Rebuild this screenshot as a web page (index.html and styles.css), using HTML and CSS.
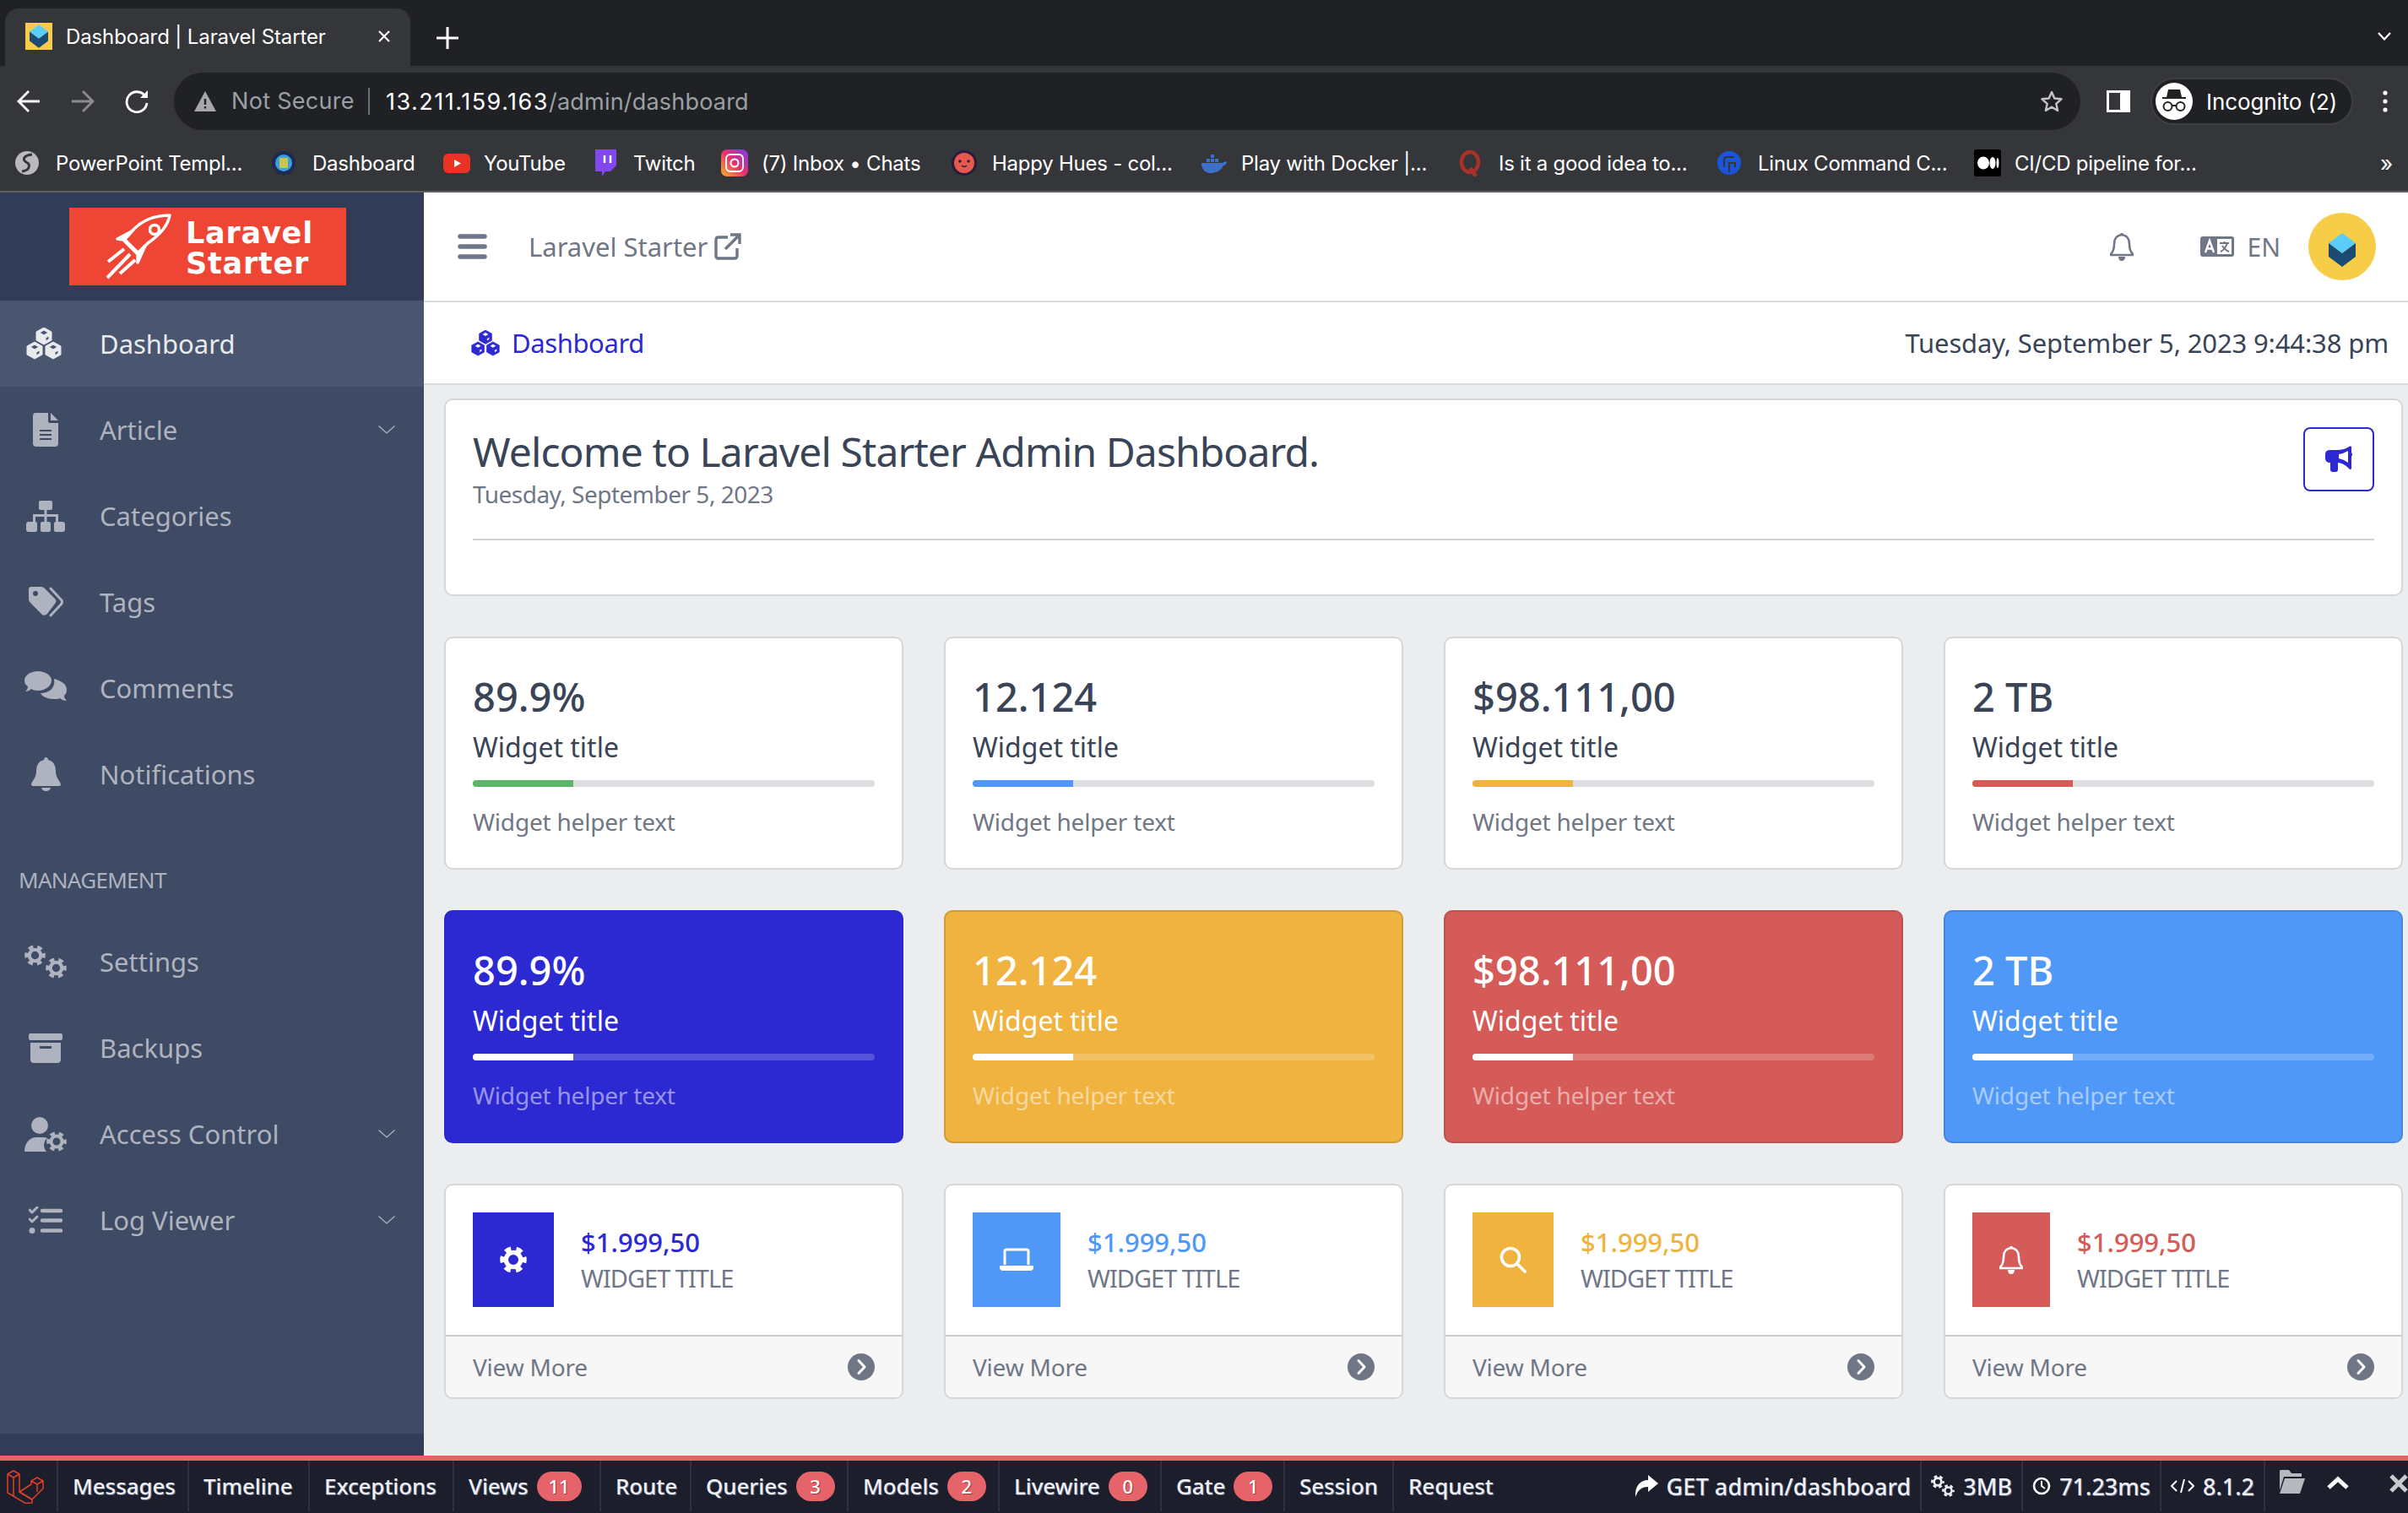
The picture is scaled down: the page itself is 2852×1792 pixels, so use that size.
FILE: index.html
```html
<!DOCTYPE html>
<html lang="en">
<head>
<meta charset="utf-8">
<title>Dashboard | Laravel Starter</title>
<link rel="stylesheet" href="styles.css">
</head>
<body>
<svg class="defs" aria-hidden="true">
  <symbol id="cubes" viewBox="0 0 42 38"><path fill="currentColor" fill-rule="evenodd" d="M21 0L30 5V15L21 20L12 15V5ZM21 3L26 6L21 9L16 6ZM23 12L27 10V13.5L23 16ZM10 17L19 22V32L10 37L1 32V22ZM10 20L15 23L10 26L5 23ZM12 29L16 27V30.5L12 33ZM32 17L41 22V32L32 37L23 32V22ZM32 20L37 23L32 26L27 23ZM34 29L38 27V30.5L34 33Z" stroke="currentColor" stroke-width="1" stroke-linejoin="round"/></symbol>
  <symbol id="file" viewBox="0 0 30 40"><path fill="currentColor" fill-rule="evenodd" d="M3 0H18V10Q18 12 20 12H30V36Q30 40 26 40H4Q0 40 0 36V4Q0 0 3 0ZM8 20V22H22V20ZM8 25V27H22V25ZM8 30V32H22V30Z"/><path fill="currentColor" d="M21 0L30 9H21Z"/></symbol>
  <symbol id="sitemap" viewBox="0 0 46 37"><path fill="currentColor" d="M17 0H29Q31 0 31 2V9Q31 11 29 11H24.500V16H38V25H35V19H24.500V25H21.500V19H11V25H8V16H21.500V11H17Q15 11 15 9V2Q15 0 17 0ZM3 25H11Q13 25 13 27V35Q13 37 11 37H3Q0 37 0 34V28Q0 25 3 25ZM19 25H27Q29 25 29 27V35Q29 37 27 37H19Q17 37 17 35V27Q17 25 19 25ZM35 25H43Q46 25 46 28V34Q46 37 43 37H35Q33 37 33 35V27Q33 25 35 25Z"/></symbol>
  <symbol id="tags" viewBox="0 0 41 36"><path fill="currentColor" fill-rule="evenodd" d="M3 0H15Q17 0 19 2L31 14Q34 17 31 20L22 32Q19 35 16 33L2 19Q0 17 0 15V3Q0 0 3 0ZM8 5A3 3 0 1 0 8 11A3 3 0 1 0 8 5Z"/><path fill="none" stroke="currentColor" stroke-width="3" stroke-linecap="round" d="M26 2L39 16Q40 18 39 20L26 34"/></symbol>
  <symbol id="comments" viewBox="0 0 50 41"><path fill="currentColor" d="M16 0C25 0 32 5 32 11C32 17 25 23 16 23C13 23 10 22 8 21C6 23 3 24 1 24C3 22 4 20 4 18C1 16 0 14 0 11C0 5 7 0 16 0Z"/><path fill="currentColor" d="M35 9C43 11 50 15 50 22C50 25 49 27 47 29C47 31 48 33 50 35C47 35 44 34 42 32C40 33 38 33 35 33C27 33 21 30 19 26C29 26 37 20 35 9Z"/></symbol>
  <symbol id="bellsolid" viewBox="0 0 35 40"><path fill="currentColor" d="M17.500 0Q20 0 20 3Q29 5 29 16C29 25 35 29 35 32Q35 34 33 34H2Q0 34 0 32C0 29 6 25 6 16Q6 5 15 3Q15 0 17.500 0ZM12 36H23Q22 40 17.500 40Q13 40 12 36Z"/></symbol>
  <symbol id="bellline" viewBox="0 0 28 33"><path fill="none" stroke="currentColor" stroke-width="2.600" stroke-linejoin="round" d="M14 2Q23 3 23 13C23 20 25 23 27 25V26H1V25C3 23 5 20 5 13Q5 3 14 2Z"/><path fill="currentColor" d="M10 28H18Q18 33 14 33Q10 33 10 28ZM12.500 0H15.500V3H12.500Z"/></symbol>
  <symbol id="gear" viewBox="0 0 24 24"><circle cx="12" cy="12" r="6.500" fill="none" stroke="currentColor" stroke-width="4"/><circle cx="12" cy="12" r="9.800" fill="none" stroke="currentColor" stroke-width="4" stroke-dasharray="5.500 4.760" stroke-dashoffset="2.750"/></symbol>
  <symbol id="gears" viewBox="0 0 50 40"><use href="#gear" x="0" y="0" width="25" height="25"/><use href="#gear" x="25" y="15" width="25" height="25"/></symbol>
  <symbol id="gearsnarrow" viewBox="0 0 28 26"><use href="#gear" x="0" y="0" width="16" height="16"/><use href="#gear" x="13" y="11" width="15" height="15"/></symbol>
  <symbol id="archive" viewBox="0 0 40 35"><path fill="currentColor" fill-rule="evenodd" d="M2 0H38Q40 0 40 2V6Q40 8 38 8H2Q0 8 0 6V2Q0 0 2 0ZM2 11H38V31Q38 35 34 35H6Q2 35 2 31ZM13 15V18H27V15Z"/></symbol>
  <symbol id="usergear" viewBox="0 0 50 41"><circle cx="18" cy="10" r="10" fill="currentColor"/><path fill="currentColor" d="M0 41C0 30 7 24 14 24H22Q25 24 27 25C22 29 22 36 26 41Z"/><use href="#gear" x="26" y="17" width="24" height="24"/></symbol>
  <symbol id="listcheck" viewBox="0 0 40 33"><path fill="none" stroke="currentColor" stroke-width="3" stroke-linecap="round" stroke-linejoin="round" d="M1 4L4 7L10 1M1 15L4 18L10 12"/><circle cx="4" cy="28.500" r="3.500" fill="currentColor"/><path fill="none" stroke="currentColor" stroke-width="4.500" stroke-linecap="round" d="M16 5H38M16 16.500H38M16 28.500H38"/></symbol>
  <symbol id="chev" viewBox="0 0 20 10"><path fill="none" stroke="currentColor" stroke-width="1.300" d="M0.500 0.500L10 9L19.500 0.500"/></symbol>
  <symbol id="circlechev" viewBox="0 0 32 32"><circle cx="16" cy="16" r="16" fill="currentColor"/><path fill="none" stroke="#fff" stroke-width="3" stroke-linecap="round" stroke-linejoin="round" d="M13 8.500L20 16L13 23.500"/></symbol>
  <symbol id="cube" viewBox="0 0 32 40"><path fill="#5bcdf9" d="M16 0L32 12L16 24L0 12Z"/><path fill="#1b4a72" d="M0 12L16 24L32 12V28L16 40L0 28Z"/></symbol>
</svg>

<div class="tabstrip">
  <div class="tab">
    <svg class="favicon" viewBox="0 0 32 32"><rect width="32" height="32" fill="#f7cc46"/><use href="#cube" x="5" y="0" width="22" height="32"/></svg>
    <span class="tab-title">Dashboard | Laravel Starter</span>
    <svg class="tab-x" viewBox="0 0 16 16"><path stroke="#fff" stroke-width="2.200" d="M2 2L14 14M14 2L2 14"/></svg>
  </div>
  <svg class="tab-plus" viewBox="0 0 26 26"><path stroke="#fff" stroke-width="3" d="M13 0V26M0 13H26"/></svg>
  <svg class="tab-chev" viewBox="0 0 16 10"><path fill="none" stroke="#fff" stroke-width="2.200" d="M1 1L8 8.500L15 1"/></svg>
</div>

<div class="toolbar">
  <svg class="nav-ic" viewBox="0 0 28 28"><path fill="none" stroke="#fff" stroke-width="2.800" d="M27 14H3M14 2L2 14L14 26"/></svg>
  <svg class="nav-ic nav-off" viewBox="0 0 28 28"><path fill="none" stroke="#8a8b8d" stroke-width="2.800" d="M1 14H25M14 2L26 14L14 26"/></svg>
  <svg class="nav-ic nav-reload" viewBox="0 0 28 28"><path fill="none" stroke="#fff" stroke-width="2.800" d="M24 8A12 12 0 1 0 26 16"/><path fill="#fff" d="M18 10H27V1Z"/></svg>
  <div class="omnibox">
    <svg class="warn" viewBox="0 0 26 24"><path fill="#a6a7a9" fill-rule="evenodd" d="M13 0L26 24H0ZM11.800 9V16H14.200V9ZM11.800 18V20.500H14.200V18Z"/></svg>
    <span class="not-secure">Not Secure</span>
    <span class="url"><span class="url-host">13.211.159.163</span>/admin/dashboard</span>
    <svg class="star" viewBox="0 0 28 28"><path fill="none" stroke="#c4c5c7" stroke-width="2.400" stroke-linejoin="round" d="M14 3L17.300 10.500L25.500 11.300L19.300 16.800L21.100 25L14 20.800L6.900 25L8.700 16.800L2.500 11.300L10.700 10.500Z"/></svg>
  </div>
  <svg class="panel" viewBox="0 0 28 28"><path fill="#fff" fill-rule="evenodd" d="M0 1H28V27H0ZM3 4V24H16V4Z"/></svg>
  <div class="incognito">
    <svg class="inc-ic" viewBox="0 0 44 44"><circle cx="22" cy="22" r="22" fill="#fff"/><path fill="#202124" d="M15 8H29L31 17H36V19H8V17H13Z"/><circle cx="14.500" cy="28" r="5" fill="none" stroke="#202124" stroke-width="2"/><circle cx="29.500" cy="28" r="5" fill="none" stroke="#202124" stroke-width="2"/><path stroke="#202124" stroke-width="2" d="M19 27H25"/></svg>
    <span class="inc-text">Incognito (2)</span>
  </div>
  <svg class="dots" viewBox="0 0 6 26"><circle cx="3" cy="3" r="2.600" fill="#fff"/><circle cx="3" cy="13" r="2.600" fill="#fff"/><circle cx="3" cy="23" r="2.600" fill="#fff"/></svg>
</div>

<div class="bookmarks">
  <div class="bm"><svg class="bm-ic" viewBox="0 0 32 32"><circle cx="14" cy="16" r="14" fill="#b9babc"/><path fill="none" stroke="#35363a" stroke-width="3" d="M20 6C10 7 8 12 13 15C19 18 17 25 8 26"/></svg><span>PowerPoint Templ...</span></div>
  <div class="bm"><svg class="bm-ic" viewBox="0 0 32 32"><circle cx="14" cy="16" r="14" fill="#1e2a52"/><circle cx="14" cy="16" r="10" fill="#3aa0dc"/><rect x="9" y="10" width="10" height="12" fill="#c8c64a"/></svg><span>Dashboard</span></div>
  <div class="bm"><svg class="bm-ic" viewBox="0 0 32 32"><rect y="5" width="32" height="23" rx="6" fill="#ea3323"/><path fill="#fff" d="M13 12L21 16.500L13 21Z"/></svg><span>YouTube</span></div>
  <div class="bm"><svg class="bm-ic" viewBox="0 0 32 32"><path fill="#8347ef" d="M3 0H28V19L21 26H15L11 32V26H3Z"/><path stroke="#fff" stroke-width="2.500" d="M14 7V16M21 7V16"/></svg><span>Twitch</span></div>
  <div class="bm"><svg class="bm-ic" viewBox="0 0 32 32"><defs><linearGradient id="ig" x1="0" y1="1" x2="1" y2="0"><stop offset="0" stop-color="#fdb028"/><stop offset=".5" stop-color="#e8306e"/><stop offset="1" stop-color="#7a3bf0"/></linearGradient></defs><rect width="32" height="32" rx="7" fill="url(#ig)"/><rect x="6" y="6" width="20" height="20" rx="5" fill="none" stroke="#fff" stroke-width="2"/><circle cx="16" cy="16" r="4.500" fill="none" stroke="#fff" stroke-width="2"/></svg><span>(7) Inbox • Chats</span></div>
  <div class="bm"><svg class="bm-ic" viewBox="0 0 32 32"><circle cx="15" cy="16" r="15" fill="#2b1a3a"/><circle cx="15" cy="16" r="12" fill="#e6594f"/><circle cx="10" cy="14" r="1.700" fill="#2b1a3a"/><circle cx="20" cy="14" r="1.700" fill="#2b1a3a"/><path fill="none" stroke="#2b1a3a" stroke-width="1.500" d="M12 19Q15 22 18 19"/></svg><span>Happy Hues - col...</span></div>
  <div class="bm"><svg class="bm-ic" viewBox="0 0 32 28"><path fill="#3d71c9" d="M1 14H26Q29 11 31 13Q30 17 27 17C24 24 17 26 11 26C5 26 1 21 1 14Z"/><path fill="#3d71c9" d="M7 9H11V13H7ZM12 9H16V13H12ZM17 9H21V13H17ZM12 4H16V8H12Z"/></svg><span>Play with Docker |...</span></div>
  <div class="bm"><svg class="bm-ic" viewBox="0 0 32 32"><ellipse cx="14" cy="15" rx="10" ry="12" fill="none" stroke="#a83228" stroke-width="4.500"/><path stroke="#a83228" stroke-width="4.500" d="M14 22L21 32"/></svg><span>Is it a good idea to...</span></div>
  <div class="bm"><svg class="bm-ic" viewBox="0 0 32 32"><circle cx="14" cy="16" r="14" fill="#1a56db"/><path fill="none" stroke="#35363a" stroke-width="2.200" d="M20 9H11Q8 9 8 12V21M14 27V16H21V21"/></svg><span>Linux Command C...</span></div>
  <div class="bm"><svg class="bm-ic" viewBox="0 0 32 32"><rect width="32" height="32" rx="3" fill="#000"/><ellipse cx="11" cy="16" rx="7" ry="7.500" fill="#fff"/><ellipse cx="22" cy="16" rx="3.500" ry="7" fill="#fff"/><ellipse cx="28" cy="16" rx="1.500" ry="6" fill="#fff"/></svg><span>CI/CD pipeline for...</span></div>
  <div class="bm-more">»</div>
</div>

<div class="app">
  <aside class="sidebar">
    <div class="brand">
      <div class="logo">
        <svg class="rocket" viewBox="0 0 78 78"><g fill="none" stroke="#fff" stroke-width="3.500" stroke-linejoin="round"><path d="M76 2C60 2 45 7 34 18L22 31L38 47L50 35C66 24 74 14 76 2Z"/><circle cx="58" cy="19" r="5.500"/><path fill="#fff" d="M31 21L14 30L22 31ZM47 38L38 58L38 47Z"/><path d="M22 31L38 47" stroke-width="5"/></g><path stroke="#fff" stroke-width="4" d="M22 42L3 57M29 48L2 76M35 55L17 71"/></svg>
        <div class="logo-text">Laravel<br>Starter</div>
      </div>
    </div>
    <nav class="nav">
      <a class="nav-item is-active"><span class="nav-icon"><svg class="i-cubes"><use href="#cubes"/></svg></span><span class="nav-label">Dashboard</span></a>
      <a class="nav-item"><span class="nav-icon"><svg class="i-file"><use href="#file"/></svg></span><span class="nav-label">Article</span><svg class="nav-chev"><use href="#chev"/></svg></a>
      <a class="nav-item"><span class="nav-icon"><svg class="i-sitemap"><use href="#sitemap"/></svg></span><span class="nav-label">Categories</span></a>
      <a class="nav-item"><span class="nav-icon"><svg class="i-tags"><use href="#tags"/></svg></span><span class="nav-label">Tags</span></a>
      <a class="nav-item"><span class="nav-icon"><svg class="i-comments"><use href="#comments"/></svg></span><span class="nav-label">Comments</span></a>
      <a class="nav-item"><span class="nav-icon"><svg class="i-bell"><use href="#bellsolid"/></svg></span><span class="nav-label">Notifications</span></a>
      <div class="nav-title">MANAGEMENT</div>
      <a class="nav-item"><span class="nav-icon"><svg class="i-gears"><use href="#gears"/></svg></span><span class="nav-label">Settings</span></a>
      <a class="nav-item"><span class="nav-icon"><svg class="i-archive"><use href="#archive"/></svg></span><span class="nav-label">Backups</span></a>
      <a class="nav-item"><span class="nav-icon"><svg class="i-usergear"><use href="#usergear"/></svg></span><span class="nav-label">Access Control</span><svg class="nav-chev"><use href="#chev"/></svg></a>
      <a class="nav-item"><span class="nav-icon"><svg class="i-listcheck"><use href="#listcheck"/></svg></span><span class="nav-label">Log Viewer</span><svg class="nav-chev"><use href="#chev"/></svg></a>
    </nav>
    <div class="sidebar-foot"></div>
  </aside>

  <main class="main">
    <header class="topbar">
      <svg class="burger" viewBox="0 0 35 30"><path stroke="#6f7685" stroke-width="5.500" stroke-linecap="round" d="M3 3H32M3 15H32M3 27H32"/></svg>
      <span class="app-name">Laravel Starter</span>
      <svg class="ext" viewBox="0 0 32 32"><path fill="none" stroke="#6f7685" stroke-width="3.400" d="M16 5H5Q2 5 2 8V27Q2 30 5 30H24Q27 30 27 27V18"/><path fill="none" stroke="#6f7685" stroke-width="3.400" d="M13 19L29 3M19 2H30V13"/></svg>
      <span class="topbar-gap"></span>
      <svg class="top-bell"><use href="#bellline"/></svg>
      <svg class="lang" viewBox="0 0 40 24"><rect width="40" height="24" rx="3" fill="#6f7685"/><rect x="20" y="3" width="17" height="18" fill="#fff"/><path fill="none" stroke="#fff" stroke-width="2.400" d="M6 19L11 5L16 19M8 14.500H14"/><path fill="none" stroke="#6f7685" stroke-width="2" d="M23 8H34M28.500 6V8M32 8Q29 16 24 18M26 11Q29 16 34 18"/></svg>
      <span class="lang-text">EN</span>
      <span class="avatar"><svg class="avatar-cube"><use href="#cube"/></svg></span>
    </header>
    <div class="crumbs">
      <a class="crumb"><svg class="crumb-ic"><use href="#cubes"/></svg><span>Dashboard</span></a>
      <span class="clock">Tuesday, September 5, 2023 9:44:38 pm</span>
    </div>
    <div class="content">
      <section class="card welcome">
        <div class="welcome-head">
          <div>
            <h1 class="welcome-title">Welcome to Laravel Starter Admin Dashboard.</h1>
            <div class="welcome-date">Tuesday, September 5, 2023</div>
          </div>
          <button class="megaphone"><svg viewBox="0 0 32 32"><path fill="#2c29d2" d="M31 1V8Q33 10 31 13V27Q30 29 28 27Q23 21 15 20V28Q15 31 12 31H9Q6 31 6 28V20Q0 20 0 15V10Q0 5 6 5H14Q23 5 28 1Q30 0 31 1ZM27 6Q22 9 16 10V15Q22 16 27 20Z"/></svg></button>
        </div>
        <hr class="welcome-rule">
      </section>

      <div class="grid">
        <div class="card stat"><div class="stat-num">89.9%</div><div class="stat-title">Widget title</div><div class="bar"><div class="bar-fill fill-success"></div></div><div class="stat-help">Widget helper text</div></div>
        <div class="card stat"><div class="stat-num">12.124</div><div class="stat-title">Widget title</div><div class="bar"><div class="bar-fill fill-info"></div></div><div class="stat-help">Widget helper text</div></div>
        <div class="card stat"><div class="stat-num">$98.111,00</div><div class="stat-title">Widget title</div><div class="bar"><div class="bar-fill fill-warning"></div></div><div class="stat-help">Widget helper text</div></div>
        <div class="card stat"><div class="stat-num">2 TB</div><div class="stat-title">Widget title</div><div class="bar"><div class="bar-fill fill-danger"></div></div><div class="stat-help">Widget helper text</div></div>

        <div class="card stat solid bg-primary"><div class="stat-num">89.9%</div><div class="stat-title">Widget title</div><div class="bar"><div class="bar-fill"></div></div><div class="stat-help">Widget helper text</div></div>
        <div class="card stat solid bg-warning"><div class="stat-num">12.124</div><div class="stat-title">Widget title</div><div class="bar"><div class="bar-fill"></div></div><div class="stat-help">Widget helper text</div></div>
        <div class="card stat solid bg-danger"><div class="stat-num">$98.111,00</div><div class="stat-title">Widget title</div><div class="bar"><div class="bar-fill"></div></div><div class="stat-help">Widget helper text</div></div>
        <div class="card stat solid bg-info"><div class="stat-num">2 TB</div><div class="stat-title">Widget title</div><div class="bar"><div class="bar-fill"></div></div><div class="stat-help">Widget helper text</div></div>

        <div class="card mini"><div class="mini-body"><div class="mini-icon tile-primary"><svg class="mi-gear"><use href="#gear"/></svg></div><div><div class="mini-value text-primary">$1.999,50</div><div class="mini-title">WIDGET TITLE</div></div></div><div class="mini-foot"><span>View More</span><svg class="more-ic"><use href="#circlechev"/></svg></div></div>
        <div class="card mini"><div class="mini-body"><div class="mini-icon tile-info"><svg class="mi-laptop" viewBox="0 0 40 28"><path fill="none" stroke="#fff" stroke-width="3" d="M6 20V4Q6 2 8 2H32Q34 2 34 4V20"/><path fill="#fff" d="M0 21H40V23Q40 27 36 27H4Q0 27 0 23Z"/></svg></div><div><div class="mini-value text-info">$1.999,50</div><div class="mini-title">WIDGET TITLE</div></div></div><div class="mini-foot"><span>View More</span><svg class="more-ic"><use href="#circlechev"/></svg></div></div>
        <div class="card mini"><div class="mini-body"><div class="mini-icon tile-warning"><svg class="mi-search" viewBox="0 0 32 32"><circle cx="13" cy="13" r="10.500" fill="none" stroke="#fff" stroke-width="3.600"/><path stroke="#fff" stroke-width="3.600" stroke-linecap="round" d="M21 21L30 30"/></svg></div><div><div class="mini-value text-warning">$1.999,50</div><div class="mini-title">WIDGET TITLE</div></div></div><div class="mini-foot"><span>View More</span><svg class="more-ic"><use href="#circlechev"/></svg></div></div>
        <div class="card mini"><div class="mini-body"><div class="mini-icon tile-danger"><svg class="mi-bell"><use href="#bellline"/></svg></div><div><div class="mini-value text-danger">$1.999,50</div><div class="mini-title">WIDGET TITLE</div></div></div><div class="mini-foot"><span>View More</span><svg class="more-ic"><use href="#circlechev"/></svg></div></div>
      </div>
    </div>
  </main>
</div>

<footer class="debugbar">
  <div class="db-logo"><svg viewBox="0 0 44 42"><g fill="none" stroke="#e0402b" stroke-width="1.500" stroke-linejoin="round"><path d="M1 7L8 3L15 7V28L30 37V41L22 41.500L1 29ZM1 7L8 11L15 7M8 11V33"/><path d="M29 15L36 11L43 15V24L30 37L15 28L29 19ZM29 15L36 19L43 15M36 19V28"/></g></svg></div>
  <div class="db-tab">Messages</div>
  <div class="db-tab">Timeline</div>
  <div class="db-tab">Exceptions</div>
  <div class="db-tab">Views<span class="db-badge">11</span></div>
  <div class="db-tab">Route</div>
  <div class="db-tab">Queries<span class="db-badge">3</span></div>
  <div class="db-tab">Models<span class="db-badge">2</span></div>
  <div class="db-tab">Livewire<span class="db-badge">0</span></div>
  <div class="db-tab">Gate<span class="db-badge">1</span></div>
  <div class="db-tab">Session</div>
  <div class="db-tab db-last">Request</div>
  <div class="db-right">
    <div class="db-stat db-stat-plain"><svg class="db-ic" viewBox="0 0 28 26"><path fill="#fff" d="M16 0L28 10L16 20V14C9 14 4 17 1 26C0 14 6 6 16 6Z"/></svg>GET admin/dashboard</div>
    <div class="db-stat"><svg class="db-ic"><use href="#gearsnarrow"/></svg>3MB</div>
    <div class="db-stat"><svg class="db-ic db-clock" viewBox="0 0 22 22"><circle cx="11" cy="11" r="9" fill="none" stroke="#fff" stroke-width="2.600"/><path fill="none" stroke="#fff" stroke-width="2" d="M11 5V11L15 14"/></svg>71.23ms</div>
    <div class="db-stat"><svg class="db-ic" viewBox="0 0 28 18"><path fill="none" stroke="#fff" stroke-width="2" d="M7 3L1 9L7 15M21 3L27 9L21 15M16 1L12 17"/></svg>8.1.2</div>
    <div class="db-actions">
      <svg class="db-folder" viewBox="0 0 30 28"><path fill="#b6b8bd" d="M1 0H11L14 4H26V8H5L0 24V1ZM6 10H30L24 28H0Z"/></svg>
      <svg class="db-up" viewBox="0 0 26 16"><path fill="none" stroke="#fff" stroke-width="5" d="M2 14L13 4L24 14"/></svg>
      <svg class="db-x" viewBox="0 0 22 22"><path stroke="#c8cad0" stroke-width="5" d="M2 2L20 20M20 2L2 20"/></svg>
    </div>
  </div>
</footer>
</body>
</html>
```
FILE: styles.css
```css
* { box-sizing: border-box; }
html, body { margin: 0; padding: 0; }
body {
  width: 2852px;
  height: 1792px;
  overflow: hidden;
  display: flex;
  flex-direction: column;
  background: #ebedef;
  font-family: "Noto Sans", sans-serif;
  color: #394456;
}
.defs { position: absolute; width: 0; height: 0; }
svg { display: block; flex: none; }

/* Browser chrome */
.tabstrip {
  height: 78px;
  flex: none;
  background: #202124;
  display: flex;
  align-items: flex-end;
  padding-left: 6px;
  padding-right: 20px;
  font-family: Inter, sans-serif;
}
.tab {
  width: 480px;
  height: 68px;
  background: #35363a;
  border-radius: 16px 16px 0 0;
  display: flex;
  align-items: center;
  padding-left: 24px;
  padding-bottom: 2px;
  color: #fff;
}
.favicon { width: 32px; height: 32px; }
.tab-title { font-size: 24px; margin-left: 16px; width: 369px; white-space: nowrap; letter-spacing: -.12px; }
.tab-x { width: 16px; height: 16px; }
.tab-plus { width: 26px; height: 26px; margin-left: 31px; margin-bottom: 20px; }
.tab-chev { width: 16px; height: 10px; margin-left: auto; margin-bottom: 30px; }

.toolbar {
  height: 84px;
  flex: none;
  background: #35363a;
  display: flex;
  align-items: center;
  padding: 0 0 0 20px;
  font-family: Inter, sans-serif;
}
.nav-ic { width: 28px; height: 28px; margin-right: 36px; }
.nav-reload { margin-right: 30px; }
.omnibox {
  width: 2258px;
  height: 68px;
  border-radius: 34px;
  background: #202124;
  display: flex;
  align-items: center;
  padding-left: 24px;
  font-size: 27px;
  color: #9aa0a6;
}
.warn { width: 26px; height: 24px; margin-right: 18px; }
.not-secure { width: 164px; height: 32px; line-height: 32px; border-right: 2px solid #6d6e70; white-space: nowrap; letter-spacing: .3px; }
.url { margin-left: 19px; white-space: nowrap; letter-spacing: .2px; }
.url-host { color: #fff; letter-spacing: 1.500px; }
.star { width: 28px; height: 28px; margin-left: auto; margin-right: 20px; }
.panel { width: 28px; height: 28px; margin-left: 31px; }
.incognito {
  width: 240px;
  height: 56px;
  margin-left: 24px;
  border: 2px solid #3e3f44;
  border-radius: 28px;
  background: #202124;
  display: flex;
  align-items: center;
  padding-left: 4px;
  color: #fff;
  font-size: 26px;
}
.inc-ic { width: 44px; height: 44px; }
.inc-text { margin-left: 16px; white-space: nowrap; letter-spacing: -.1px; }
.dots { width: 6px; height: 26px; margin-left: 35px; }

.bookmarks {
  height: 66px;
  flex: none;
  background: #35363a;
  border-bottom: 2px solid #5e5f62;
  display: grid;
  grid-template-columns: 304px 203px 177px 152px 273px 295px 305px 307px 304px 481px 40px;
  align-items: center;
  padding-left: 18px;
  padding-bottom: 2px;
  color: #fff;
  font-family: Inter, sans-serif;
  font-size: 24px;
  letter-spacing: -.25px;
}
.bm { display: flex; align-items: center; gap: 16px; white-space: nowrap; }
.bm-ic { width: 32px; height: 32px; }
.bm-more { font-size: 26px; }

/* App frame */
.app { flex: 1; min-height: 0; display: flex; }
.sidebar {
  width: 502px;
  flex: none;
  background: #3f4b64;
  display: flex;
  flex-direction: column;
}
.brand {
  height: 128px;
  flex: none;
  background: #323c57;
  display: flex;
  justify-content: center;
  padding-top: 18px;
  padding-right: 10px;
}
.logo {
  width: 328px;
  height: 92px;
  background: #ef4535;
  display: flex;
  align-items: center;
  padding-left: 43px;
  color: #fff;
}
.rocket { width: 78px; height: 78px; }
.logo-text {
  margin-left: 17px;
  padding-top: 3px;
  font-family: "DejaVu Sans", sans-serif;
  font-weight: 700;
  font-size: 35px;
  line-height: 36px;
  letter-spacing: .8px;
}
.nav { flex: 1; display: flex; flex-direction: column; }
.nav-item {
  height: 102px;
  flex: none;
  display: flex;
  align-items: center;
  color: #aeb3bf;
  font-size: 31px;
  padding-right: 34px;
}
.nav-item.is-active { background: #4a5570; color: #e9eaee; }
.nav-icon { width: 118px; padding-left: 27px; padding-right: 37px; display: flex; justify-content: center; flex: none; }
.nav-label { flex: 1; white-space: nowrap; }
.nav-chev { width: 20px; height: 10px; }
.i-cubes { width: 42px; height: 38px; margin-left: -4px; }
.i-file { width: 30px; height: 40px; }
.i-sitemap { width: 46px; height: 37px; }
.i-tags { width: 41px; height: 36px; }
.i-comments { width: 50px; height: 41px; }
.i-bell { width: 35px; height: 40px; }
.i-gears { width: 50px; height: 40px; }
.i-archive { width: 40px; height: 35px; }
.i-usergear { width: 50px; height: 41px; }
.i-listcheck { width: 40px; height: 33px; }
.nav-title {
  height: 120px;
  flex: none;
  padding: 58px 0 0 22px;
  font-size: 26px;
  line-height: 32px;
  color: #aeb3bf;
  letter-spacing: -.7px;
}
.sidebar-foot { height: 26px; flex: none; background: #323c57; }

.main { flex: 1; min-width: 0; display: flex; flex-direction: column; }
.topbar {
  height: 130px;
  flex: none;
  background: #fff;
  border-bottom: 2px solid #d8dbe0;
  display: flex;
  align-items: center;
  padding-left: 40px;
  color: #6f7685;
}
.burger { width: 35px; height: 30px; margin-top: -1px; }
.app-name { margin-left: 49px; font-size: 31px; white-space: nowrap; }
.ext { width: 32px; height: 32px; margin-left: 8px; }
.topbar-gap { flex: 1; }
.top-bell { width: 28px; height: 33px; }
.lang { width: 40px; height: 24px; margin-left: 79px; }
.lang-text { font-size: 30px; margin-left: 16px; }
.avatar {
  width: 80px;
  height: 80px;
  margin-left: 33px;
  margin-right: 38px;
  border-radius: 50%;
  background: #f7cc46;
  display: flex;
  align-items: center;
  justify-content: center;
  padding-top: 7px;
}
.avatar-cube { width: 32px; height: 40px; }

.crumbs {
  height: 98px;
  flex: none;
  background: #fff;
  border-bottom: 2px solid #d8dbe0;
  display: flex;
  align-items: center;
  justify-content: space-between;
  padding: 0 23px 0 56px;
}
.crumb { display: flex; align-items: center; gap: 14px; color: #2c29d2; font-size: 31px; letter-spacing: -.4px; }
.crumb-ic { width: 34px; height: 31px; }
.clock { font-size: 31px; white-space: nowrap; letter-spacing: -.14px; }

.content { flex: 1; padding: 16px 6px 0 24px; display: flex; flex-direction: column; gap: 48px; }
.card { background: #fff; border: 2px solid #d4d6da; border-radius: 10px; }
.welcome { height: 234px; padding: 32px 32px 0; }
.welcome-head { display: flex; justify-content: space-between; align-items: flex-start; }
.welcome-title { margin: 0; font-size: 48px; font-weight: 400; line-height: 58px; white-space: nowrap; letter-spacing: -.9px; }
.welcome-date { font-size: 28px; line-height: 42px; color: #6f7685; white-space: nowrap; letter-spacing: -.5px; }
.megaphone {
  width: 84px;
  height: 76px;
  padding: 0;
  background: #fff;
  border: 2px solid #2c29d2;
  border-radius: 8px;
  display: flex;
  align-items: center;
  justify-content: center;
}
.megaphone svg { width: 32px; height: 32px; }
.welcome-rule { border: 0; border-top: 2px solid #cfd1d6; margin: 32px 0 0; }

.grid { display: grid; grid-template-columns: repeat(4, 544px); gap: 48px; }
.stat { height: 276px; padding: 33px 32px 0; }
.stat-num { font-size: 47px; line-height: 72px; font-weight: 500; white-space: nowrap; }
.stat-title { font-size: 32px; line-height: 50px; margin-top: -1px; white-space: nowrap; }
.bar { height: 8px; margin-top: 14px; border-radius: 4px; background: #dcdde1; overflow: hidden; }
.bar-fill { width: 25%; height: 100%; }
.fill-success { background: #5bb66c; }
.fill-info { background: #4f98f7; }
.fill-warning { background: #f0b340; }
.fill-danger { background: #d45b57; }
.stat-help { margin-top: 19px; font-size: 28px; line-height: 44px; color: #6f7685; white-space: nowrap; letter-spacing: -.2px; }
.solid { color: #fff; }
.solid .bar { background: rgba(255,255,255,.2); }
.solid .bar-fill { background: #fff; }
.solid .stat-help { color: rgba(255,255,255,.5); }
.bg-primary { background: #2c29d2; border-color: #2c29d2; }
.bg-warning { background: #f0b340; border-color: #cf9a38; }
.bg-danger { background: #d45b57; border-color: #b85350; }
.bg-info { background: #4f98f7; border-color: #4786da; }

.mini { height: 255px; display: flex; flex-direction: column; }
.mini-body { height: 177px; flex: none; display: flex; padding: 32px 32px 0; gap: 32px; }
.mini-icon { height: 112px; display: flex; align-items: center; justify-content: center; flex: none; }
.tile-primary { width: 96px; background: #2c29d2; }
.tile-info { width: 104px; background: #4f98f7; }
.tile-warning { width: 96px; background: #f0b340; }
.tile-danger { width: 92px; background: #d45b57; }
.mi-gear { width: 32px; height: 32px; color: #fff; }
.mi-laptop { width: 40px; height: 28px; }
.mi-search { width: 32px; height: 32px; }
.mi-bell { width: 28px; height: 33px; color: #fff; }
.mini-value { font-size: 31px; line-height: 42px; margin-top: 14px; font-weight: 500; }
.mini-title { font-size: 29px; line-height: 42px; margin-top: 1px; color: #6f7685; white-space: nowrap; letter-spacing: -1px; }
.text-primary { color: #2c29d2; }
.text-info { color: #4f98f7; }
.text-warning { color: #f0b340; }
.text-danger { color: #d45b57; }
.mini-foot {
  flex: 1;
  border-top: 2px solid #c9cbd1;
  background: #f7f7f8;
  border-radius: 0 0 8px 8px;
  display: flex;
  align-items: center;
  justify-content: space-between;
  padding: 0 32px;
  font-size: 28px;
  letter-spacing: -.2px;
  color: #6f7685;
}
.more-ic { width: 32px; height: 32px; }

/* Debug bar */
.debugbar {
  height: 68px;
  flex: none;
  background: #1c1f2b;
  border-top: 6px solid #e66469;
  display: grid;
  grid-template-columns: 69px 155px 143px 171px 174px 107px 186px 179px 192px 146px 129px 140px 1fr;
  grid-template-rows: 1fr;
  color: #eef0f6;
  font-size: 26px;
  font-weight: 500;
  letter-spacing: -.1px;
  text-shadow: 1px 1px #5a6480;
  white-space: nowrap;
}
.db-logo { display: flex; align-items: center; padding-left: 8px; border-right: 2px solid #2d3140; margin: 0 0 2px; }
.db-logo svg { width: 44px; height: 42px; }
.db-tab {
  display: flex;
  align-items: center;
  padding-left: 17px;
  border-right: 2px solid #2d3140;
  margin-bottom: 2px;
}
.db-last { border-right: 0; }
.db-badge {
  min-width: 46px;
  height: 35px;
  margin-left: 10px;
  padding: 0 14px;
  border-radius: 18px;
  background: #e66469;
  color: #fff;
  font-size: 22px;
  line-height: 35px;
  text-align: center;
  text-shadow: 1px 1px #a33;
}
.db-right { display: flex; justify-content: flex-end; min-width: 0; }
.db-stat {
  display: flex;
  align-items: center;
  gap: 10px;
  padding: 0 11px;
  border-right: 2px solid #2d3140;
  margin-bottom: 2px;
  font-size: 27px;
  letter-spacing: 0;
}
.db-stat-plain { letter-spacing: .1px; }
.db-ic { width: 28px; height: 26px; }
.db-clock { width: 22px; height: 22px; }
.db-actions { width: 169px; display: flex; align-items: center; padding-left: 17px; }
.db-folder { width: 30px; height: 28px; margin-top: -12px; }
.db-up { width: 26px; height: 16px; margin-left: 26px; margin-top: -10px; }
.db-x { width: 22px; height: 22px; margin-left: 48px; margin-top: -8px; }
```
